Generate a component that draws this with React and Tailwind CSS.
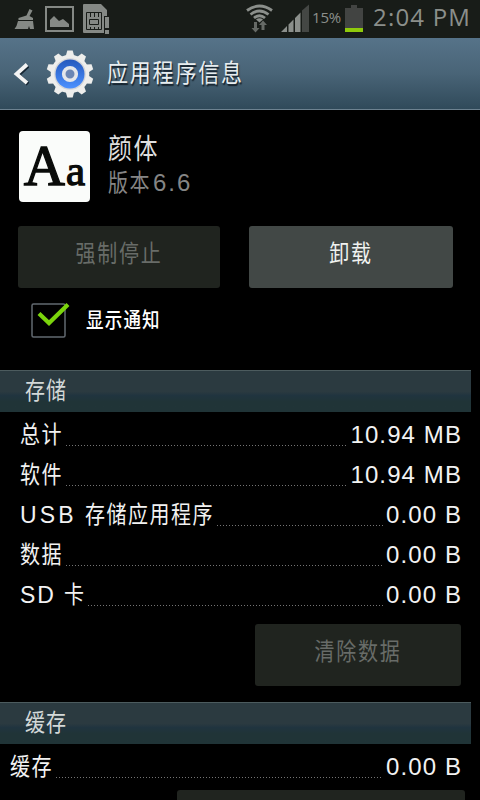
import React from 'react';

const cjk = "font-['Liberation_Sans','Noto_Sans_CJK_SC',sans-serif]";

// Condensed, tall Chinese lettering
function Hanzi({ children, className = '' }) {
  return <span className={`inline-block origin-center scale-y-[1.2] whitespace-nowrap ${className}`}>{children}</span>;
}

function StatusBar() {
  return (
    <div className="flex h-[38px] items-start bg-[#181c18] text-[#8b8f8b]">
      <svg width="240" height="38" viewBox="0 0 240 38" fill="#858985">
        <path d="M29.500 9 32.500 10.500 29.500 16 33 18V20H18.500V18L26.500 15.500z" />
        <path d="M18 21H33L34 29H30L29 26 28 29H14.500Q17 26 18 21z" />
        <path fillRule="evenodd" d="M45 6H74V32H45zM47 8V30H72V8z" />
        <path d="M50 27V20L54 16 59 21 63 19 69 24V27z" />
        <path d="M83 5Q83 4 84 4H101L107 10V16H104V33H84Q83 33 83 32z" />
        <g fill="none" stroke="#181c18">
          <path d="M86.500 12.500H101.500V29.500H86.500z" />
          <path d="M89.500 19.500H98.500V24.500H89.500z" />
          <path d="M90.500 13V17M94.500 13V17M98.500 13V17M90.500 27V30M94.500 27V30M98.500 27V30" />
        </g>
        <path fill="#181c18" d="M104 16H110V35H104z" />
        <path d="M105 17H109V28H105zM105 30H109V34H105z" />
      </svg>
      <svg width="72" height="38" viewBox="240 0 72 38">
        <g fill="none" stroke="#8b8f8b" strokeWidth="2.800">
          <path d="M247 10.500Q259.500 1.500 272 10.500" />
          <path d="M250.500 14.500Q259.500 7.500 268.500 14.500" />
          <path d="M254 18Q259.500 13.500 265 18" />
        </g>
        <path fill="#8b8f8b" d="M256 19.500Q259.500 17 263 19.500L259.500 22.500z" />
        <path fill="#666a66" d="M254 22H257V28H259.500L255.500 32.500 251.500 28H254zM261.500 30H264.500V25H267L263 20.500 259 25H261.500z" />
        <path fill="#8b8f8b" d="M281 32 287 26V32zM288.500 24.500 293.500 19.500V32H288.500zM295 18 300.500 12.500V32H295z" />
        <path fill="#444744" d="M302 10.500 309 4.500V32H302z" />
      </svg>
      <span className="mt-[7px] w-[32px] font-['Open_Sans',sans-serif] text-[15px] leading-[20px] tracking-[-0.2px] whitespace-nowrap">15%</span>
      <svg width="20" height="38" viewBox="0 0 20 38">
        <path fill="#424442" d="M7 5H13V8H19V28H1V8H7z" />
        <path fill="#8fca0b" d="M1 28H19V32H1z" />
      </svg>
      <span className="mt-[2px] ml-[9px] font-['Open_Sans',sans-serif] text-[24px] leading-[29px] tracking-[1.2px] whitespace-nowrap">2:04 PM</span>
    </div>
  );
}

function Gear() {
  return (
    <svg width="48" height="48" viewBox="-24 -24 48 48">
      <defs>
        <linearGradient id="blue" x1="0" y1="0" x2="0" y2="1">
          <stop offset="0" stopColor="#2458bd" />
          <stop offset="1" stopColor="#4c91ff" />
        </linearGradient>
      </defs>
      <g fill="#eeeeec">
        <circle r="19.300" />
        {[0, 36, 72, 108, 144, 180, 216, 252, 288, 324].map((angle) => (
          <path key={angle} transform={`rotate(${angle})`} d="M-4.200 -18 -2.700 -23.500H2.700L4.200 -18z" />
        ))}
      </g>
      <circle r="15.800" fill="#d2d4d8" />
      <circle r="14.500" fill="url(#blue)" />
      <circle r="6.300" fill="#6b86b4" stroke="#e4e6ea" strokeWidth="3.600" />
    </svg>
  );
}

function Header() {
  return (
    <header className="flex h-[72px] items-center border-b border-[#6d8290] bg-linear-to-b from-[#567389] via-[#496477] to-[#304a5a]">
      <svg className="ml-[13px]" width="16" height="24" viewBox="0 0 16 24">
        <path d="M14 3 4 12 14 21" fill="none" stroke="#152532" strokeWidth="4" transform="translate(1 1)" />
        <path d="M14 2.500 3.500 12 14 21" fill="none" stroke="#f4f4f4" strokeWidth="3.800" />
      </svg>
      <div className="ml-[17px]"><Gear /></div>
      <h1 className="ml-[13px] text-[21px] leading-[30px] font-normal tracking-[1.8px] text-[#e8edef] [text-shadow:1px_1px_1px_#14202a]">
        <Hanzi>应用程序信息</Hanzi>
      </h1>
    </header>
  );
}

function Section({ children, className = '' }) {
  return (
    <div className={`h-[42px] w-[471px] border-t border-[#4c5b5e] bg-linear-to-b from-[#2b3a40] from-50% via-[#20343f] via-60% to-[#203437] to-75% pl-[25px] text-[20px] leading-[40px] tracking-[1px] text-[#d3d8d8] ${className}`}>
      <Hanzi>{children}</Hanzi>
    </div>
  );
}

function Row({ prefix, prefixClass, label, value, className = 'pl-[20px]' }) {
  return (
    <div className={`flex h-[40px] items-center pr-[18px] text-[#f2f2f2] ${className}`}>
      {prefix && <span className={`text-[23px] ${prefixClass}`}>{prefix}</span>}
      <Hanzi className="text-[20px] leading-[40px] tracking-[1.5px]">{label}</Hanzi>
      <div className="mx-[3px] mt-[20px] h-px flex-1 bg-[repeating-linear-gradient(to_right,#747474_0_1px,transparent_1px_3px)]" />
      <span className="text-[24px] leading-[40px] tracking-[1.100px]">{value}</span>
    </div>
  );
}

const storage = [
  { label: '总计', value: '10.94 MB' },
  { label: '软件', value: '10.94 MB' },
  { prefix: 'USB', prefixClass: 'mr-[8px] tracking-[3.200px]', label: '存储应用程序', value: '0.00 B' },
  { label: '数据', value: '0.00 B' },
  { prefix: 'SD', prefixClass: 'mr-[8px] tracking-[2px]', label: '卡', value: '0.00 B' },
];

export default function App() {
  return (
    <div lang="zh-CN" className={`h-[800px] w-[480px] overflow-hidden bg-black ${cjk}`}>
      <StatusBar />
      <Header />

      <div className="flex pt-[21px] pl-[19px]">
        <div className="flex h-[71px] w-[71px] items-baseline justify-center rounded-[4px] bg-[#fafcfa] font-['Liberation_Serif',serif] leading-[69px] text-[#090b09] [-webkit-text-stroke:1.3px_#090b09]">
          <span className="text-[57px] tracking-[1px]">A</span>
          <span className="text-[43px]">a</span>
        </div>
        <div className="ml-[18px]">
          <div className="h-[36px] text-[24px] leading-[36px] tracking-[1.5px] text-[#dedede]"><Hanzi>颜体</Hanzi></div>
          <div className="flex h-[32px] items-center text-[20px] tracking-[1.5px] text-[#858585]">
            <Hanzi>版本</Hanzi>
            <span className="ml-[2px] text-[24px] tracking-[2px]">6.6</span>
          </div>
        </div>
      </div>

      <div className="mt-[24px] flex gap-[29px] pl-[18px] text-[20px] leading-[56px] tracking-[1.700px]">
        <button className="h-[62px] w-[202px] rounded-[3px] bg-[#20241f] pb-[6px] text-[#686c68]"><Hanzi>强制停止</Hanzi></button>
        <button className="h-[62px] w-[204px] rounded-[3px] bg-[#424846] pb-[6px] text-[#f0f2f0]"><Hanzi>卸载</Hanzi></button>
      </div>

      <div className="mt-[15px] flex h-[35px] items-center pl-[31px]">
        <svg width="40" height="35" viewBox="0 0 40 35" className="overflow-visible">
          <rect x="1" y="1" width="33" height="33" rx="1.500" fill="none" stroke="#626970" strokeWidth="1.500" />
          <path d="M8 10.500 18 20 37 1.500" fill="none" stroke="#7bd40c" strokeWidth="4.200" />
        </svg>
        <Hanzi className="ml-[15px] text-[17.500px] font-medium tracking-[1.200px] text-white">显示通知</Hanzi>
      </div>

      <Section className="mt-[32px]">存储</Section>
      <div className="pt-[3px]">
        {storage.map((item) => <Row key={item.label} {...item} />)}
      </div>

      <button className="mt-[9px] ml-[255px] block h-[62px] w-[206px] rounded-[3px] bg-[#20241f] pb-[6px] text-[20px] tracking-[1.700px] text-[#686c68]"><Hanzi>清除数据</Hanzi></button>

      <Section className="mt-[16px]">缓存</Section>
      <div className="pt-[3px]">
        <Row label="缓存" value="0.00 B" className="pl-[10px]" />
      </div>
      <div className="mt-[3px] ml-[177px] h-[62px] w-[288px] rounded-[3px] bg-[#20241f]" />
    </div>
  );
}
